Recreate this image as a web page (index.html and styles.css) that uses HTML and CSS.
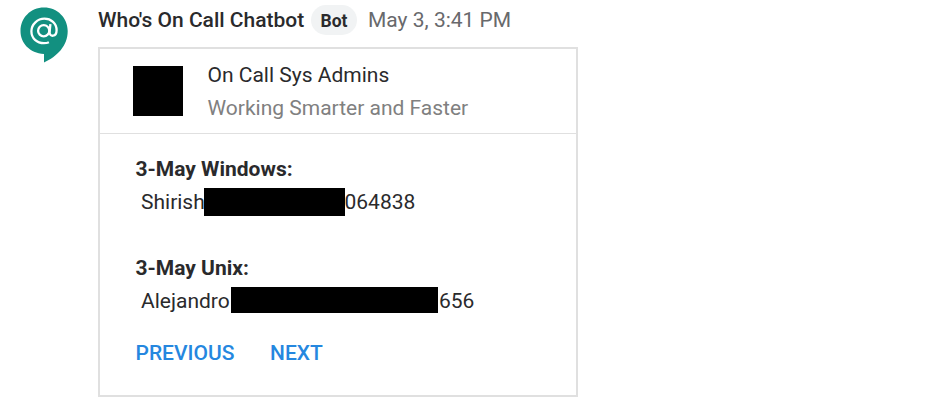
FILE: index.html
```html
<!DOCTYPE html>
<html lang="en">
<head>
<meta charset="utf-8">
<title>Who's On Call Chatbot</title>
<link rel="stylesheet" href="styles.css">
</head>
<body>
<article class="message">
  <svg class="avatar" viewBox="0 0 50 58" aria-hidden="true">
    <path d="M25 1.500C11.500 1.500 1.500 12 1.500 25c0 12 9 22 23.500 23v8.500C38 50.500 48.700 40 48.700 25 48.700 12 38.500 1.500 25 1.500z" fill="#129080"/>
    <g fill="none" stroke="#fff" stroke-width="2.300" transform="translate(.9 .7)">
      <circle cx="23.800" cy="24" r="5.600"/>
      <path d="M30.500 17.500 29.700 25.500c-.3 5 7 5 7-2 0-7-5.500-11.500-12.200-11.500S11.500 17.500 11.500 24.500 17 36.500 24 36.500c2 0 3.500-.3 5-1"/>
    </g>
  </svg>
  <div class="content">
    <header class="meta">
      <span class="sender">Who's On Call Chatbot</span>
      <span class="badge">Bot</span>
      <time class="time">May 3, 3:41 PM</time>
    </header>
    <section class="card">
      <div class="card-header">
        <div class="thumb"></div>
        <div class="titles">
          <div class="title">On Call Sys Admins</div>
          <div class="subtitle">Working Smarter and Faster</div>
        </div>
      </div>
      <div class="card-body">
        <div class="label">3-May Windows:</div>
        <div class="contact"><span class="first-a">Shirish</span><span class="redact redact-a"></span><span class="digits">064838</span></div>
        <div class="label second">3-May Unix:</div>
        <div class="contact"><span class="first-b">Alejandro</span><span class="redact redact-b"></span><span class="digits">656</span></div>
        <div class="actions"><a class="previous">PREVIOUS</a><a>NEXT</a></div>
      </div>
    </section>
  </div>
</article>
</body>
</html>
```
FILE: styles.css
```css
* { box-sizing: border-box; }
body { margin: 0; background: #fff; color: #2a2a2c; font: 21px/33px Roboto, sans-serif; }
.message { display: flex; padding: 4px 0 0 19px; }
.avatar { width: 50px; height: 58px; margin-top: 2px; flex: none; }
.content { margin-left: 29px; width: 480px; }
.meta { display: flex; align-items: center; height: 32px; white-space: nowrap; }
.sender { font-weight: 500; width: 213px; }
.badge { width: 46px; height: 30px; border-radius: 15px; background: #f1f3f4; font-size: 17.5px; line-height: 32px; font-weight: 700; text-align: center; }
.time { margin-left: 11px; color: #68696c; }
.card { margin-top: 11px; height: 350px; border: 2px solid #e0e0e0; }
.card-header { display: flex; height: 85px; padding: 10px 0 0 33px; border-bottom: 1px solid #e0e0e0; }
.thumb { width: 50px; height: 50px; margin-top: 7px; background: #000; }
.titles { margin-left: 24.5px; }
.subtitle { color: #808080; }
.card-body { padding: 19px 0 0 35.5px; }
.label { font-weight: 700; }
.second { margin-top: 33px; }
.contact { display: flex; align-items: center; height: 33px; padding-left: 5.5px; white-space: nowrap; }
.first-a { width: 63px; }
.first-b { width: 90px; }
.digits { margin-left: -.5px; }
.redact { background: #000; }
.redact-a { width: 141px; height: 28px; margin-top: -1px; }
.redact-b { width: 207px; height: 26px; margin: -3px 1.5px 0 0; }
.actions { display: flex; margin-top: 19px; color: #2587df; font-weight: 500; }
.previous { width: 134.5px; }
```
